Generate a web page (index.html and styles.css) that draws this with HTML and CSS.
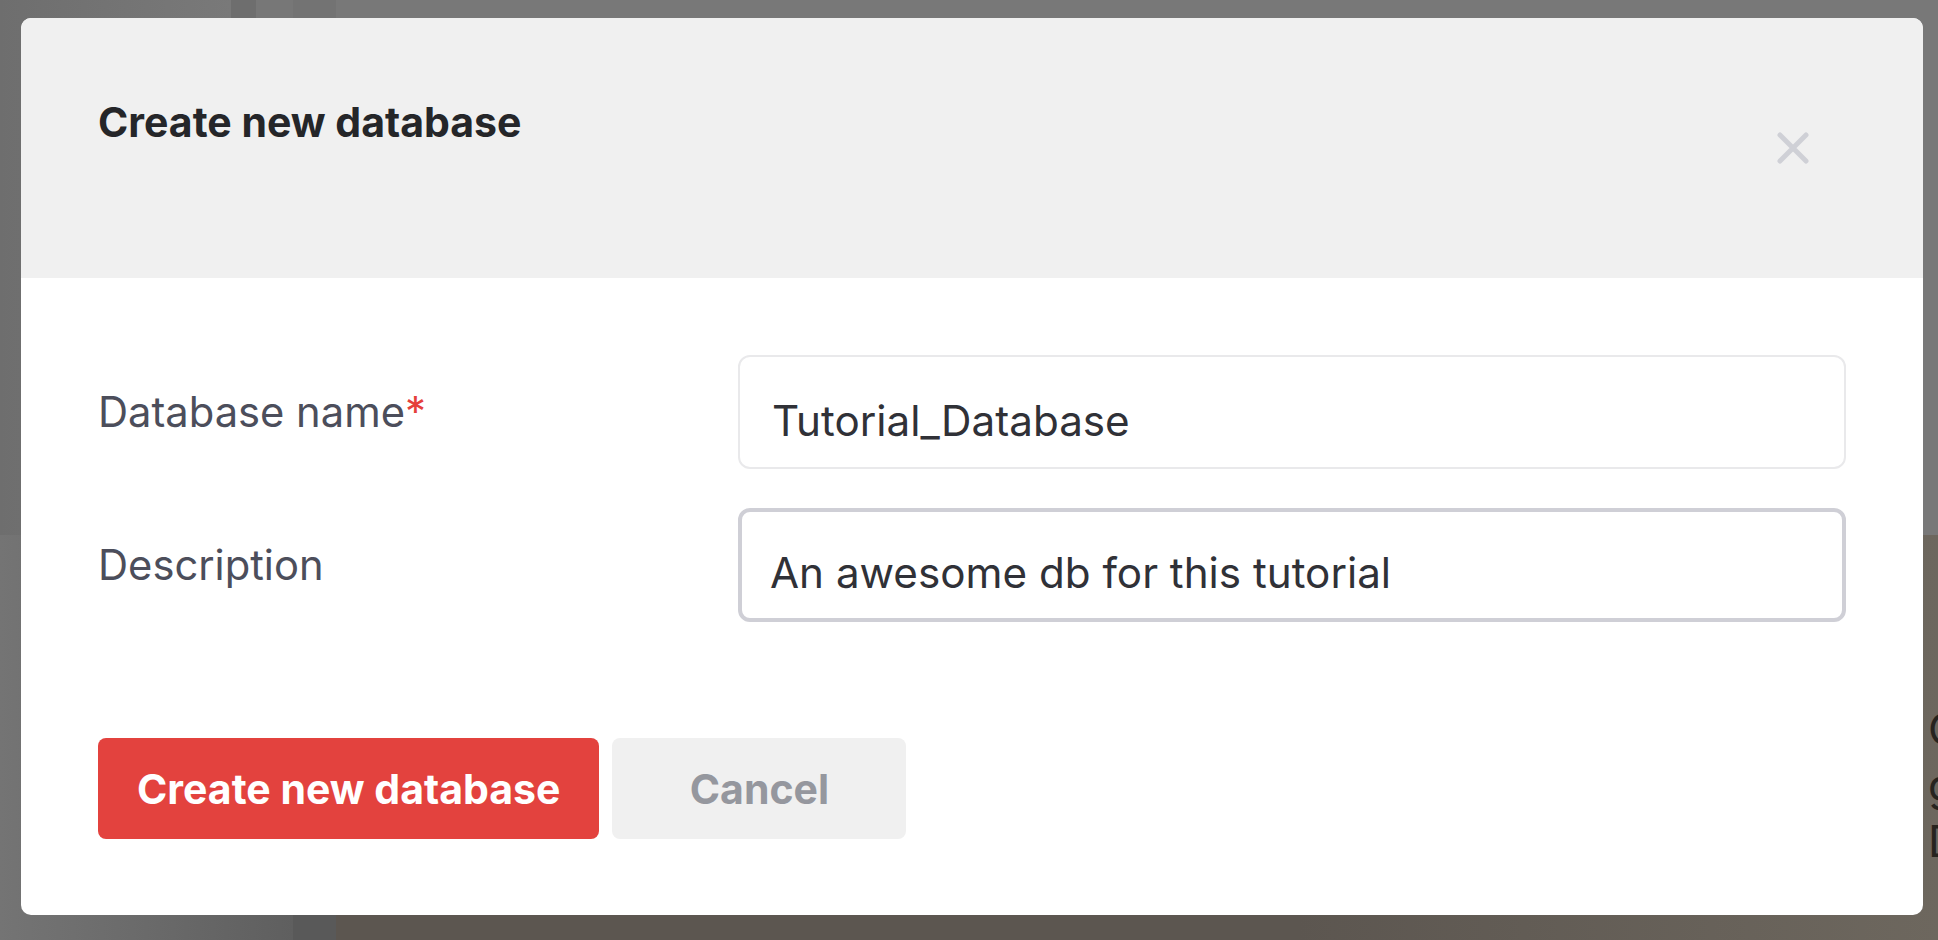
FILE: index.html
```html
<!DOCTYPE html>
<html lang="en">
<head>
<meta charset="utf-8">
<title>Create new database</title>
<link rel="stylesheet" href="styles.css">
</head>
<body>
<div class="page">
  <div class="cell side-a-top"></div>
  <div class="cell side-b-top"></div>
  <div class="cell side-c-top"></div>
  <div class="cell side-d-top"></div>
  <div class="cell main-top"></div>
  <div class="cell side-bottom"></div>
  <div class="cell side-d-bottom"></div>
  <div class="cell main-bottom">
    <div class="behind-text">
      <div class="behind-line">C</div>
      <div class="behind-line link">g</div>
      <div class="behind-line">D</div>
    </div>
  </div>
</div>

<div class="modal" role="dialog" aria-labelledby="modal-title">
  <div class="modal-header">
    <h2 class="modal-title" id="modal-title">Create new database</h2>
    <button class="close-btn" type="button" aria-label="Close">
      <svg width="34" height="34" viewBox="0 0 34 34" aria-hidden="true">
        <path d="M4 4 L30 30 M30 4 L4 30" stroke="#cfd0d6" stroke-width="5" stroke-linecap="round" fill="none"/>
      </svg>
    </button>
  </div>
  <div class="modal-body">
    <div class="form-grid">
      <label class="field-label" for="db-name">Database name<span class="req">*</span></label>
      <input class="field-input" id="db-name" type="text" value="Tutorial_Database">
      <label class="field-label" for="db-desc">Description</label>
      <input class="field-input focused" id="db-desc" type="text" value="An awesome db for this tutorial">
    </div>
    <div class="actions">
      <button class="btn btn-primary" type="button">Create new database</button>
      <button class="btn btn-secondary" type="button">Cancel</button>
    </div>
  </div>
</div>
</body>
</html>
```

FILE: styles.css
```css
html, body {
  margin: 0;
  padding: 0;
  height: 100%;
  overflow: hidden;
}

body {
  font-family: Inter, "Liberation Sans", sans-serif;
  background: #5c5650;
}

/* dimmed page behind the dialog */
.page {
  display: grid;
  grid-template-columns: 231px 25px 37px 43px 1fr;
  grid-template-rows: 535px 1fr;
  height: 940px;
  width: 1938px;
}

.side-a-top { background: linear-gradient(to right, #6e6e6e, #797979); }
.side-b-top { background: #6e6e6e; }
.side-c-top { background: #777777; }
.side-d-top { background: #737373; }
.main-top { background: #787878; }

.side-bottom {
  grid-column: 1 / 4;
  background: linear-gradient(to right, #747474 0%, #6a6a6a 50%, #5f5f5f 100%);
}
.side-d-bottom { background: #595959; }
.main-bottom {
  background: linear-gradient(to right, #5c5650 0%, #5c5650 60%, #6d675e 100%);
  overflow: hidden;
}

.behind-text {
  padding: 166px 0 0 1592px;
  font-family: Inter, sans-serif;
  font-size: 44px;
  line-height: 56px;
  color: #27241f;
  white-space: nowrap;
}
.behind-line.link { text-decoration: underline; }

/* dialog */
.modal {
  position: absolute;
  top: 18px;
  left: 21px;
  width: 1902px;
  height: 897px;
  background: #ffffff;
  border-radius: 10px;
  overflow: hidden;
  display: flex;
  flex-direction: column;
}

.modal-header {
  height: 260px;
  box-sizing: border-box;
  background: #f0f0f0;
  padding: 79px 77px 0 77px;
  display: flex;
  justify-content: space-between;
  align-items: flex-start;
}

.modal-title {
  margin: 0;
  font-size: 41px;
  font-weight: 700;
  color: #252629;
  line-height: normal;
}

.close-btn {
  width: 106px;
  height: 100px;
  margin-top: 1px;
  padding: 0;
  border: 0;
  background: transparent;
  display: flex;
  align-items: center;
  justify-content: center;
  cursor: pointer;
}

.modal-body {
  padding: 77px 77px 76px 77px;
}

.form-grid {
  display: grid;
  grid-template-columns: 640px 1fr;
  row-gap: 39px;
  align-items: center;
}

.field-label {
  font-size: 41.7px;
  color: #4c4e5b;
  line-height: normal;
}
.req { color: #e5403b; }

.field-input {
  display: block;
  width: 100%;
  height: 114px;
  box-sizing: border-box;
  margin: 0;
  padding: 37px 32px 21px 32px;
  border: 2px solid #e9e9eb;
  border-radius: 12px;
  font-family: Inter, "Liberation Sans", sans-serif;
  font-size: 42.2px;
  color: #303137;
  background: #ffffff;
  outline: none;
}
.field-input.focused {
  border: 4px solid #cfcfd6;
  padding-left: 28px;
  padding-top: 36px;
}

.actions {
  margin-top: 116px;
  display: flex;
  gap: 13px;
}

.btn {
  height: 101px;
  border: 0;
  border-radius: 8px;
  font-family: Inter, "Liberation Sans", sans-serif;
  font-size: 41px;
  font-weight: 700;
  line-height: normal;
  cursor: pointer;
}
.btn-primary {
  background: #e3423e;
  color: #ffffff;
  padding: 0 39px;
}
.btn-secondary {
  background: #f0f0f0;
  color: #95979e;
  width: 294px;
  padding: 0;
}
```
